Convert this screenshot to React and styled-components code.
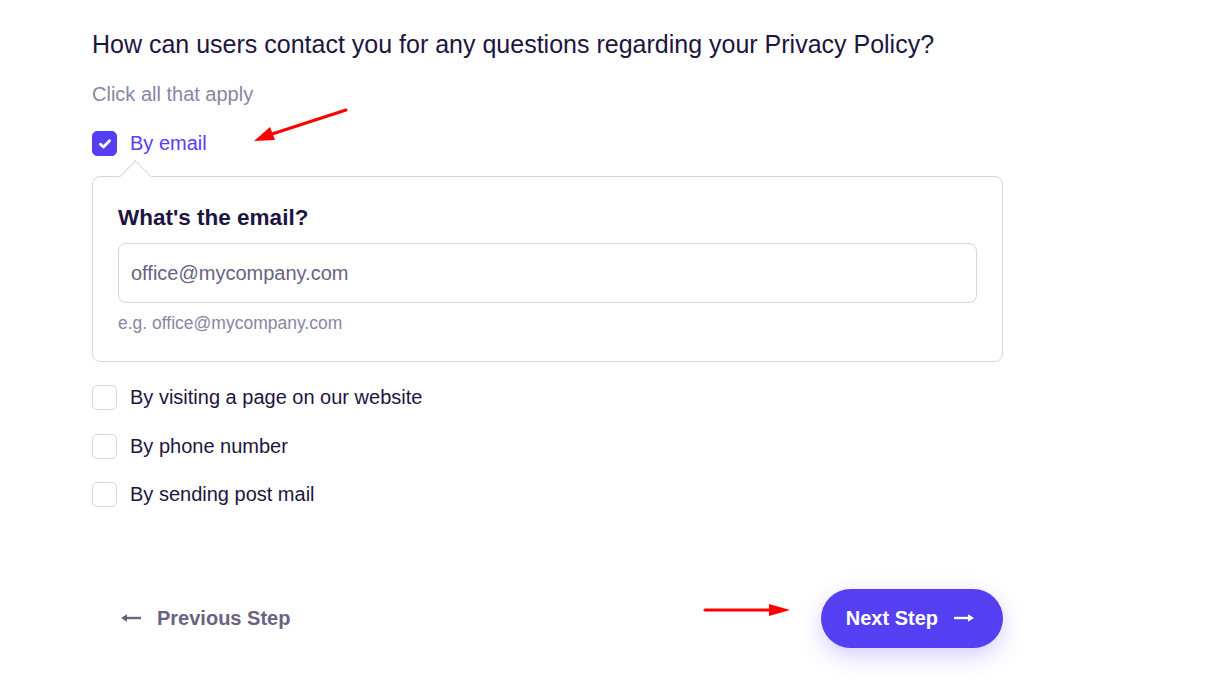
import React from 'react';
import styled, { createGlobalStyle } from 'styled-components';

const GlobalStyle = createGlobalStyle`
  body {
    margin: 0;
    background: #ffffff;
    font-family: 'Liberation Sans', Arial, sans-serif;
  }
`;

const options = [
  'By visiting a page on our website',
  'By phone number',
  'By sending post mail',
];

export default function App() {
  return (
    <>
      <GlobalStyle />
      <Page>
        <Title>
          How can users contact you for any questions regarding your Privacy Policy?
        </Title>
        <Hint>Click all that apply</Hint>
        <OptionRow>
          <CheckBox checked>
            <svg width="12" height="10" viewBox="0 0 12 10">
              <path
                d="M1.5 5.2 L4.5 8 L10.5 1.8"
                fill="none"
                stroke="#fff"
                strokeWidth="2.8"
                strokeLinecap="round"
                strokeLinejoin="round"
              />
            </svg>
          </CheckBox>
          <OptionLabel checked>By email</OptionLabel>
        </OptionRow>
        <DetailBox>
          <DetailTitle>What's the email?</DetailTitle>
          <EmailInput placeholder="office@mycompany.com" />
          <HelpText>e.g. office@mycompany.com</HelpText>
        </DetailBox>
        <OptionList>
          {options.map((o) => (
            <OptionRow key={o}>
              <CheckBox />
              <OptionLabel>{o}</OptionLabel>
            </OptionRow>
          ))}
        </OptionList>
        <Footer>
          <BackButton>
            <svg width="20" height="10" viewBox="0 0 20 10">
              <path d="M2 5 H20" stroke="#6b6282" strokeWidth="2.4" />
              <path d="M0 5 L6 1.2 V8.8 Z" fill="#6b6282" />
            </svg>
            Previous Step
          </BackButton>
          <NextButton>
            Next Step
            <svg width="20" height="10" viewBox="0 0 20 10">
              <path d="M0 5 H18" stroke="#fff" strokeWidth="2.4" />
              <path d="M20 5 L14 1.2 V8.8 Z" fill="#fff" />
            </svg>
          </NextButton>
        </Footer>
        <Annotations width="1229" height="693" viewBox="0 0 1229 693">
          <path d="M346 110 L272 134" stroke="#f00" strokeWidth="3" strokeLinecap="round" />
          <path d="M254 141 L270 127 L275 140 Z" fill="#f00" />
          <path d="M705 610 H772" stroke="#f00" strokeWidth="3" strokeLinecap="round" />
          <path d="M790 610 L769 604 V616 Z" fill="#f00" />
        </Annotations>
      </Page>
    </>
  );
}

const Page = styled.div`
  position: relative;
  width: 911px;
  padding: 28px 0 40px 92px;
`;

const Title = styled.h1`
  margin: 0;
  font-size: 25px;
  line-height: 32px;
  font-weight: 400;
  color: #1d1540;
`;

const Hint = styled.div`
  margin-top: 22px;
  font-size: 20px;
  line-height: 24px;
  color: #8b84a3;
`;

const OptionList = styled.div`
  display: flex;
  flex-direction: column;
  gap: 23.5px;
  margin-top: 23px;
`;

const OptionRow = styled.div`
  display: flex;
  align-items: center;
  gap: 13px;
  height: 25px;
  ${Hint} + & {
    margin-top: 25px;
  }
`;

const CheckBox = styled.span`
  box-sizing: border-box;
  display: flex;
  align-items: center;
  justify-content: center;
  width: 25px;
  height: 25px;
  border-radius: 5px;
  background: ${(p) => (p.checked ? '#5440f2' : '#fff')};
  border: 1px solid ${(p) => (p.checked ? '#5440f2' : '#d6d6de')};
`;

const OptionLabel = styled.span`
  font-size: 20px;
  line-height: 25px;
  color: ${(p) => (p.checked ? '#5440f2' : '#1d1540')};
`;

const DetailBox = styled.div`
  position: relative;
  box-sizing: border-box;
  margin-top: 20px;
  width: 911px;
  padding: 28px 25px 28px 25px;
  border: 1px solid #d6d6de;
  border-radius: 8px;
  background: #fff;

  &::before {
    content: '';
    position: absolute;
    top: -12px;
    left: 31px;
    width: 22px;
    height: 22px;
    background: #fff;
    border-top: 1px solid #d6d6de;
    border-left: 1px solid #d6d6de;
    transform: rotate(45deg);
  }
`;

const DetailTitle = styled.div`
  font-size: 22.5px;
  line-height: 26px;
  font-weight: 700;
  color: #1d1540;
`;

const EmailInput = styled.input`
  box-sizing: border-box;
  display: block;
  width: 100%;
  height: 60px;
  margin-top: 12px;
  padding: 0 12px;
  border: 1px solid #d6d6de;
  border-radius: 8px;
  font-family: inherit;
  font-size: 20px;
  color: #1d1540;
  outline: none;

  &::placeholder {
    color: #6b6282;
  }
`;

const HelpText = styled.div`
  margin-top: 10px;
  font-size: 17.5px;
  line-height: 20px;
  color: #8b84a3;
`;

const Footer = styled.div`
  display: flex;
  justify-content: space-between;
  align-items: center;
  margin-top: 81.5px;
`;

const BackButton = styled.button`
  display: flex;
  align-items: center;
  gap: 16px;
  padding: 0 0 0 29px;
  border: none;
  background: none;
  font-family: inherit;
  font-size: 20px;
  font-weight: 700;
  color: #6b6282;
  cursor: pointer;
`;

const NextButton = styled.button`
  display: flex;
  align-items: center;
  gap: 16px;
  height: 59px;
  padding: 0 29px 0 25px;
  border: none;
  border-radius: 30px;
  background: #5440f2;
  box-shadow: 0 8px 22px rgba(84, 64, 242, 0.25);
  font-family: inherit;
  font-size: 20px;
  font-weight: 700;
  color: #fff;
  cursor: pointer;
`;

const Annotations = styled.svg`
  position: absolute;
  top: 0;
  left: 0;
  pointer-events: none;
`;
